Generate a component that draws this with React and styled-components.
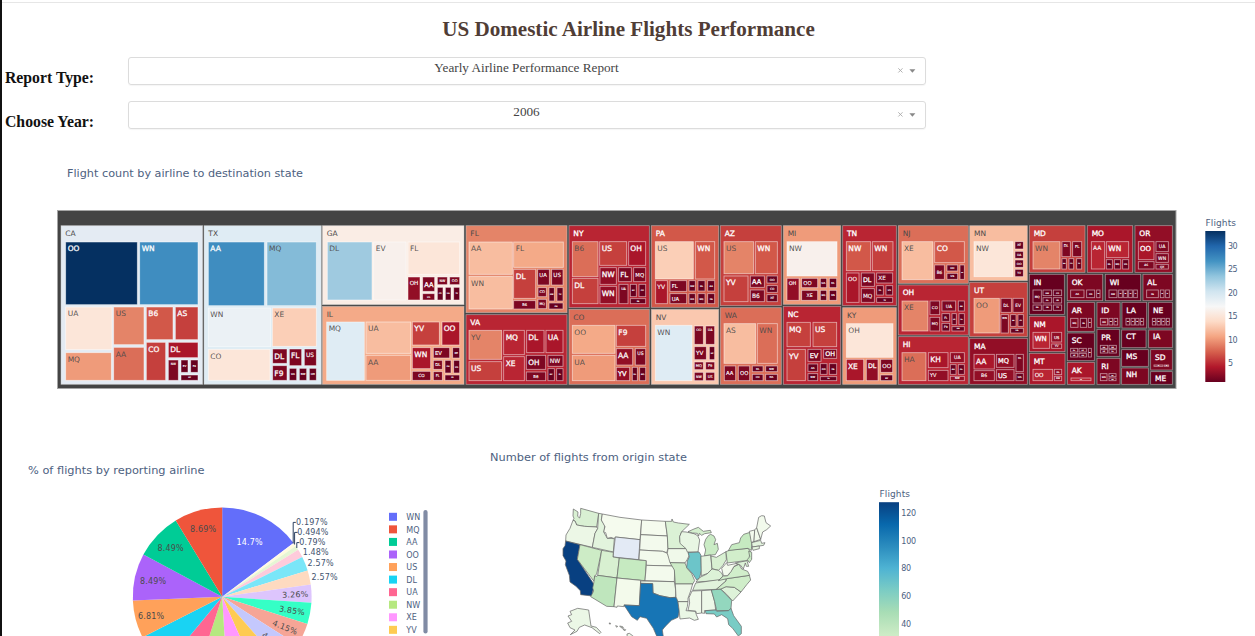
import React from "react";
import styled, { createGlobalStyle } from "styled-components";

const GlobalStyle = createGlobalStyle`
  *, *::before, *::after { box-sizing: border-box; }
  body { margin: 0; background: #fff; overflow: hidden; }
`;

const Page = styled.main`
  height: 636px;
  overflow: hidden;
  border-left: 2px solid #111;
  background: #fff;
  font-family: "Liberation Serif", "Times New Roman", serif;
`;
const TopRule = styled.div`
  height: 1px;
  margin-top: 2px;
  background: #e6e6e6;
`;
const PageBody = styled.div`
  display: flex;
  flex-direction: column;
`;
const Title = styled.h1`
  margin: 0;
  padding-top: 14px;
  height: 54px;
  text-align: center;
  font-size: 21.1px;
  line-height: 24px;
  color: #503d36;
`;
const Field = styled.div`
  display: flex;
  align-items: flex-start;
  height: 44.4px;
  padding-left: 3px;
`;
const FieldLabel = styled.label`
  width: 123px;
  padding-top: 11px;
  font-size: 15.75px;
  line-height: 20px;
  font-weight: bold;
  color: #111;
  white-space: nowrap;
`;
const Select = styled.div`
  display: flex;
  width: 798px;
  height: 28px;
  border: 1px solid #dcdcdc;
  border-radius: 3px;
  box-shadow: 0 1px 1px rgba(0, 0, 0, 0.04);
`;
const SelectValue = styled.span`
  flex: 1;
  padding-left: 27px;
  font-size: 13.2px;
  line-height: 20px;
  text-align: center;
  color: #444;
`;
const SelectTools = styled.span`
  display: flex;
  align-items: center;
  gap: 5px;
  width: 28px;
  height: 25px;
`;
const Figures = styled.section`
  display: flex;
`;
const Chart = styled.svg`
  display: block;
  flex: none;
  font-family: "DejaVu Sans", Verdana, sans-serif;
`;

const palette = {
  N: "#053061", B: "#3f8dc0", L: "#84bbd8", K: "#9fcae0", P: "#dfecf4", Q: "#e4ebf3",
  W: "#ebf1f5", V: "#f8f0ec", A: "#faede5", C: "#fce6d9", D: "#fbcfb7", O: "#fac8af",
  E: "#f8bda0", F: "#f4aa88", G: "#ef9b7a", H: "#e48468", I: "#db6e58", J: "#d25849",
  M: "#c5403d", R: "#b92533", S: "#aa162a", T: "#920e26", U: "#7d0722", X: "#67001f",
};
const lightFills = "LKPQWVACDOEFGHI";

/* Each block is one column group: its left edge, then one line per state
   (label x0 y0 x1 y1 fill) followed by its carriers. Units are thirds of a pixel. */
const groups = [
  [50, `
CA 33 77 458 553 Q; OO 47 126 262 314 N; WN 269 126 444 314 B; UA 47 321 186 449 C; MQ 47 458 184 541 G; US 191 321 282 434 H; AA 191 442 282 541 I; B6 289 321 369 419 J; AS 376 321 444 419 M; CO 289 427 347 541 M; DL 355 427 444 473 S; NW 355 480 385 541 U 9; EV 393 480 414 517 X 8; F9 422 480 444 517 X 8; HP 393 525 444 541 X 6
TX 462 77 814 553 P; AA 475 126 643 317 B; MQ 651 126 799 317 L; WN 475 324 662 440 W; XE 667 324 799 439 D; CO 475 448 660 541 C; DL 668 447 711 490 U; FL 718 447 755 497 U; US 763 447 799 497 U 18; F9 668 497 711 541 U; UA 718 505 740 541 X 8; NW 748 505 770 541 X 8; OH 778 505 799 541 X 8`],
  [315, `
GA 22 77 447 314 A; DL 37 126 171 300 K; EV 176 126 273 300 V; FL 279 126 434 223 C; OH 279 231 315 300 T 17; AA 323 231 359 274 U 20; NW 367 231 397 254 U 10; OO 404 231 434 254 U 11; US 323 281 359 300 U 7; CO 367 262 384 300 X 6; UA 391 262 408 300 X 6; YV 416 262 434 300 X 6
IL 22 319 447 553 F; MQ 35 366 148 541 P; UA 153 366 287 460 E; AA 153 466 287 541 G; YV 292 366 373 435 M; OO 381 366 434 435 S; WN 292 443 347 506 S; EV 355 443 404 474 U 16; XE 413 443 434 474 X 8; CO 292 514 347 541 U 13; DL 355 481 382 508 U 12; FL 355 515 382 541 U 11; OH 390 481 408 519 X 6; US 416 481 434 519 X 7; F9 390 525 434 541 X 6
FL 453 77 756 338 H; AA 462 126 592 223 E; WN 462 229 592 327 E; FL 596 126 745 202 F; DL 596 208 662 295 M; UA 668 208 703 255 U 16; US 710 208 744 255 U 17; CO 669 263 694 290 U 11; MQ 669 298 694 326 U 10; NW 702 263 718 303 X 6; YV 726 263 744 303 X 6; OH 702 309 744 327 X 6; B6 596 302 662 327 U 11
VA 453 344 756 553 R; YV 462 391 560 478 H; US 462 485 560 542 M; MQ 566 391 628 464 R; XE 566 470 628 542 R; DL 635 391 687 458 S; UA 693 391 744 458 S; OH 634 466 692 508 U 22; NW 699 466 744 499 U 18; B6 634 516 692 542 U 12; EV 699 506 718 542 X 6; FL 725 506 744 542 X 6`],
  [560, `
NY 27 77 268 323 R; B6 37 125 114 230 I; DL 37 235 114 311 M; US 119 125 200 196 M; OH 206 125 257 196 S; NW 120 203 169 253 T; WN 120 259 169 311 T; FL 176 203 214 245 U 21; MQ 221 203 257 245 U 16; UA 177 253 204 311 U 10; EV 211 253 229 290 X 6; OO 237 253 257 290 X 6; XE 211 296 257 311 X 6
CO 27 328 268 553 I; OO 37 376 165 460 F; UA 37 466 165 542 G; F9 169 376 257 439 M; AA 169 446 218 495 T; YV 169 502 209 542 T 20; US 226 446 257 495 U 14; DL 217 502 232 542 X 6; MQ 239 502 257 542 X 6
PA 274 77 476 322 J; US 286 125 400 237 D; WN 406 125 464 237 J; YV 287 242 322 311 S 18; FL 330 242 380 274 U 16; UA 330 281 380 311 U 16; NW 387 242 406 273 X 7; DL 414 242 435 273 X 7; AA 443 242 464 273 X 7; OO 387 281 406 311 X 7; MQ 414 281 435 311 X 7; XE 443 281 464 311 X 7
NV 274 328 476 553 O; WN 286 376 396 542 P; OO 403 378 430 433 U 10; UA 437 378 464 433 U 10; YV 403 440 439 479 U 17; HP 448 440 464 479 X 6; MQ 403 486 430 509 U 11; F9 437 486 464 509 U 11; NW 403 517 430 542 U 10; US 437 517 464 542 U 11
AZ 481 77 664 317 M; US 492 125 581 221 H; WN 586 125 652 221 J; YV 492 228 564 305 M; AA 571 228 613 262 U 20; B6 571 270 613 305 U 18; OO 621 228 652 249 X 9; CO 621 257 652 277 X 9; XE 621 284 652 305 X 9
WA 481 323 664 553 I; AS 492 371 587 490 E; WN 592 371 652 490 I; AA 493 498 527 542 U 16; OO 535 498 569 542 U 16; DL 577 498 609 515 X 8; NW 617 498 652 515 X 8; CO 577 523 609 542 X 8; HA 617 523 652 542 X 8`],
  [775, `
MI 25 77 197 313 G; NW 36 125 186 228 V; OH 36 235 72 301 T 15; OO 80 235 128 263 U 16; XE 80 271 128 301 U 14; UA 136 235 155 263 X 8; DL 163 235 185 263 X 8; MQ 136 271 155 301 X 7; US 163 271 185 301 X 8
NC 25 319 197 553 R; MQ 36 367 106 440 M; US 114 367 185 440 M; YV 36 448 91 542 M; EV 99 448 138 484 U 20; OH 146 448 185 475 U 19; AA 99 492 128 514 X 8; NW 99 521 128 542 X 8; OO 136 491 156 523 X 7; XE 163 491 185 523 X 7; DL 136 530 185 542 X 5
TN 203 77 364 317 R; NW 214 125 287 212 J; WN 292 125 354 212 M; OO 214 219 252 307 S 17; DL 259 219 298 259 U 19; MQ 259 266 298 307 U 17; XE 305 219 353 249 U 17; FL 305 257 325 285 X 7; US 333 257 353 285 X 7; YV 305 293 353 307 X 6
KY 203 323 364 553 G; OH 214 371 354 472 C; XE 214 478 266 542 S; DL 274 478 309 542 T 19; OO 317 478 353 517 U 17; EV 317 525 353 542 X 7
NJ 370 77 580 250 I; XE 381 125 474 239 E; CO 479 125 568 188 J; B6 479 195 508 238 U 13; OO 516 195 548 213 X 8; US 516 220 548 238 X 8; UA 555 195 568 238 X 4
OH 370 255 580 405 R; XE 381 303 459 393 H; CO 465 303 494 344 U 12; MQ 465 352 494 393 U 11; UA 501 303 542 333 U 13; AA 550 303 568 333 X 6; FL 501 341 524 364 X 9; F9 501 370 524 393 X 9; US 531 341 544 374 X 5; DL 552 341 568 374 X 5; NW 531 380 568 393 X 5
HI 370 410 580 553 R; HA 381 458 453 542 I; KH 460 458 519 503 S; YV 460 511 519 542 T 15; UA 526 458 568 488 T 14; AA 526 494 543 523 X 6; DL 550 494 568 523 X 6; NW 526 529 568 542 T 8`],
  [965, `
MN 14 77 187 242 E; NW 27 125 144 230 C; XE 150 125 175 147 X 9; UA 150 154 175 175 X 9; OO 150 180 175 202 X 9; YV 150 208 175 230 X 9
UT 14 247 187 410 M; OO 27 295 103 399 G; DL 108 295 139 337 U 13; EV 144 295 175 337 U 13; WN 108 344 130 399 U 8; AA 137 344 153 379 X 5; CO 159 344 175 379 X 5; UA 137 385 175 399 X 6
MA 14 415 187 553 T; AA 27 463 88 507 S; MQ 94 463 147 502 T 20; B6 27 512 88 542 T 14; US 94 509 147 542 T 20; DL 153 463 175 515 U 8; UA 153 520 175 542 X 8
MD 193 77 360 217 M; WN 204 125 285 207 H; DL 291 125 316 170 U 11; FL 323 125 350 170 U 12; AA 291 176 304 207 X 5; CO 312 176 326 207 X 5; YV 335 176 350 207 X 5
MO 367 77 503 217 S; AA 379 125 419 207 R 18; WN 424 125 491 173 R; DL 424 179 442 207 X 7; MQ 448 179 467 207 X 7; US 473 179 491 207 X 7
OR 510 77 622 217 T; OO 520 125 567 179 S 21; UA 573 125 610 155 U 14; WN 573 161 610 187 U 14; AS 520 185 567 207 U 9; QX 573 193 610 207 U 9
IN 193 223 298 343 X; MQ 204 270 229 309 X 9; NW 234 270 260 287 X 6; CO 265 270 290 287 X 6; DL 234 293 260 309 X 6; US 265 293 290 309 X 6; XE 204 315 229 331 X 6; UA 234 315 260 331 X 6; YV 265 315 290 331 X 6
NM 193 349 300 455 S; WN 204 397 254 445 R 21; US 260 397 290 426 T 12; YV 260 432 290 445 T 9
MT 193 460 300 553 S; OO 204 508 263 542 R 17; DL 268 508 290 524 T 7; NW 268 529 290 542 T 7
OK 307 223 413 302 U; AA 317 270 357 293 U 8; CO 365 270 389 293 X 7; US 395 270 405 293 X 4
WI 421 223 527 302 X; NW 432 270 456 293 X 7; OO 461 270 472 293 X 3; MQ 476 270 487 293 X 3; XE 491 270 502 293 X 3; YV 506 270 517 293 X 3
AL 534 223 622 302 U; XE 545 270 580 293 U 7; OH 586 270 597 293 X 3; DL 602 270 613 293 X 3
AR 307 307 388 394 U; MQ 317 355 339 382 U 7; XE 346 355 365 382 X 6; DL 370 355 379 382 X 3
ID 396 307 465 382 U; OO 406 355 428 375 U 7; WN 432 355 443 375 X 3; QX 447 355 458 375 X 3
LA 471 307 545 384 X; WN 483 355 494 375 X 3; XE 498 355 509 375 X 3; MQ 512 355 522 375 X 3; DL 526 355 536 375 X 3
NE 551 307 622 384 X; OO 562 355 572 375 X 3; NW 576 355 586 375 X 3; UA 590 355 600 375 X 3; XE 604 355 613 375 X 3
SC 307 399 388 482 X; DL 317 445 338 456 X 5; US 342 445 364 456 X 5; XE 317 460 338 471 X 5; OH 342 460 364 471 X 5; MQ 370 445 379 471 X 3
PR 396 388 463 469 X; AA 406 436 428 446 X 5; B6 432 436 454 446 X 5; US 406 449 428 459 X 5; DL 432 449 454 459 X 5
CT 470 390 543 443 X
IA 551 390 622 443 U
MS 470 449 550 499 X
SD 557 449 622 510 U; OO 567 495 594 499 U 2; NW 598 495 611 499 U 2
AK 307 487 388 553 S; AS 318 534 378 542 R 4
RI 396 475 465 553 U; WN 406 521 426 542 U 7; US 432 521 453 530 X 4; OO 432 534 453 542 X 4
NH 470 504 550 553 U
ME 557 515 622 553 X`],
];

const parseCell = (s) => {
  const [label, x0, y0, x1, y1, fill, size] = s.trim().split(" ");
  return { label, x: +x0, y: +y0, w: x1 - x0, h: y1 - y0, fill, size: +size || 22.5 };
};
const states = groups.flatMap(([left, text]) =>
  text.trim().split("\n").map((line) => {
    const [state, ...carriers] = line.split(";").map(parseCell);
    return { left, state, carriers };
  })
);

const isLight = (fill) => lightFills.includes(fill);
const inkFor = (fill) => (isLight(fill) ? "#4d4a4a" : "#fff");

function Carrier({ cell }) {
  const small = cell.size < 19;
  const centered = cell.size < 15;
  return (
    <g>
      <rect
        x={cell.x} y={cell.y} width={cell.w} height={cell.h}
        fill={palette[cell.fill]} stroke="#fff" strokeWidth={2.6} strokeOpacity={0.55}
      />
      <text
        x={centered ? cell.x + cell.w / 2 : cell.x + (small || cell.w < 54 ? 5 : 6)}
        y={centered && cell.h < 40 ? cell.y + cell.h / 2 + cell.size * 0.36
          : cell.y + (cell.h < 45 ? cell.h / 2 + cell.size * 0.36 : 7 + cell.size * 0.93)}
        textAnchor={centered ? "middle" : "start"}
        fontSize={cell.size} fill={inkFor(cell.fill)} fillOpacity={0.95}
        stroke={isLight(cell.fill) ? "none" : "#fff"} strokeWidth={small ? 0.4 : 0.9}
      >{cell.label}</text>
    </g>
  );
}

function Treemap() {
  return (
    <Chart width="1253" height="286" viewBox="2 146 1253 286">
      <defs>
        <linearGradient id="rdbu" x1="0" y1="0" x2="0" y2="1">
          {["#053061", "#2166ac", "#4393c3", "#92c5de", "#d1e5f0", "#f7f7f7", "#fddbc7", "#f4a582", "#d6604d", "#b2182b", "#67001f"].map((c, i) => (
            <stop key={c} offset={i / 10} stopColor={c} />
          ))}
        </linearGradient>
      </defs>
      <text x="67" y="177" fontSize="11" fill="#4d617f" textLength="236" lengthAdjust="spacingAndGlyphs">Flight count by airline to destination state</text>
      <rect x="57.5" y="210.5" width="1118.5" height="178" fill="#444" stroke="#a5a5a5" />
      {states.map(({ left, state, carriers }) => (
        <g key={state.label} transform={`translate(${left} 200) scale(0.33333)`}>
          <rect x={state.x} y={state.y} width={state.w} height={state.h} fill={palette[state.fill]} stroke="#c9c9c9" strokeOpacity="0.6" strokeWidth="2.4" />
          <text
            x={state.x + 13} y={state.y + (state.h < 55 ? 28 : 31)} fontSize="22.5"
            fill={inkFor(state.fill)} stroke={isLight(state.fill) ? "none" : "#fff"} strokeWidth="0.9"
          >{state.label}</text>
          {carriers.map((c, i) => <Carrier key={i} cell={c} />)}
        </g>
      ))}
      <text x="1205.5" y="226" fontSize="9" fill="#4d617f" textLength="30.5">Flights</text>
      <rect x="1205.3" y="231" width="20" height="151" fill="url(#rdbu)" />
      {[30, 25, 20, 15, 10, 5].map((v, i) => (
        <text key={v} x="1228" y={248.5 + i * 23.55} fontSize="8" fill="#4d617f" textLength={v > 9 ? 9.6 : undefined}>{v}</text>
      ))}
    </Chart>
  );
}

const center = [222.2, 596.8];
const radius = 89.4;
const slices = [
  [14.7, "#636efa"], [0.197, "#fff5f0"], [0.494, "#fefbdc"], [0.79, "#e6f6d4"], [1.48, "#fecbdb"],
  [2.57, "#7ae6f8"], [2.57, "#fedac0"], [3.26, "#ddc5fd"], [3.85, "#35ffc6"], [4.15, "#f6a596"],
  [4.45, "#c4c8fd"], [4.83, "#fecb52"], [5.73, "#ff97ff"], [5.95, "#b6e880"], [6, "#ff6692"],
  [6.5, "#19d3f3"], [6.81, "#ffa15a"], [8.49, "#ab63fa"], [8.49, "#00cc96"], [8.69, "#ef553b"],
];
const sliceTotal = slices.reduce((sum, [v]) => sum + v, 0);
const rim = (share) => {
  const a = (share / sliceTotal) * 2 * Math.PI;
  return `${center[0] + radius * Math.sin(a)} ${center[1] - radius * Math.cos(a)}`;
};
const wedges = slices.map(([v, color], i) => {
  const from = slices.slice(0, i).reduce((sum, [s]) => sum + s, 0);
  return { color, d: `M${center.join(" ")}L${rim(from)}A${radius} ${radius} 0 0 1 ${rim(from + v)}Z` };
});
const pieLabels = [
  ["14.7%", 249.5, 544.5, 0, "#fff"], ["8.69%", 203, 532.2, 0], ["8.49%", 170.5, 551.2, 0],
  ["8.49%", 153, 584.2, 0], ["6.81%", 151, 618.7, 0], ["3.26%", 295.2, 597.3, -2],
  ["3.85%", 292, 613.3, 9], ["4.15%", 285, 630.2, 22], ["4.45%", 273.5, 644.5, 36],
];
const outerLabels = [
  ["0.197%", 296, 525.2, 31.5], ["0.494%", 297.3, 535.2, 31], ["0.79%", 299.3, 545.2, 26],
  ["1.48%", 302.7, 555.2, 26], ["2.57%", 307.5, 565.7, 26], ["2.57%", 311.5, 580.2, 26],
];
const legend = [
  ["WN", "#636efa"], ["MQ", "#ef553b"], ["AA", "#00cc96"], ["OO", "#ab63fa"], ["US", "#ffa15a"],
  ["DL", "#19d3f3"], ["UA", "#ff6692"], ["NW", "#b6e880"], ["XE", "#ff97ff"], ["YV", "#fecb52"],
];

function AirlinePie() {
  return (
    <Chart width="468" height="204" viewBox="2 432 468 204">
      <text x="28" y="474" fontSize="11" fill="#4d617f" textLength="176.5" lengthAdjust="spacingAndGlyphs">% of flights by reporting airline</text>
      {wedges.map((w, i) => <path key={i} d={w.d} fill={w.color} />)}
      {pieLabels.map(([t, x, y, turn, fill], i) => (
        <text key={i} x={x} y={y} fontSize="8" textAnchor="middle" textLength="26" fill={fill || "#4b4b4b"} transform={`rotate(${turn} ${x} ${y - 3})`}>{t}</text>
      ))}
      <path d="M295.8 522.4H293.2V543.5M297.6 532.4H294.6V544.5M299.4 542.6H296.8V548" fill="none" stroke="#2a3f5f" strokeWidth="1" />
      {outerLabels.map(([t, x, y, len], i) => (
        <text key={i} x={x} y={y} fontSize="8" textLength={len} fill="#43546f">{t}</text>
      ))}
      {legend.map(([name, color], i) => (
        <g key={name}>
          <rect x="389" y={512.8 + i * 12.56} width="8" height="8" fill={color} />
          <text x="406.3" y={520 + i * 12.56} fontSize="8" fill="#4d617f">{name}</text>
        </g>
      ))}
      <rect x="423.4" y="510" width="4.2" height="123.5" rx="2.1" fill="#808ba4" />
    </Chart>
  );
}

/* State outlines, in thirds of a pixel from the map's corner. */
const outlines = [
  ["#d9f0d3", "92,55 146,70 140,111 103,109 80,105 75,93 69,91 72,85 69,78 70,57 84,66 83,79 89,84 92,70"],
  ["#ecf7e6", "69,91 75,93 80,105 103,109 140,111 143,116 135,130 127,172 47,153 48,135 60,115"],
  ["#084081", "47,153 90,164 82,208 130,280 133,293 128,303 126,318 92,314 91,302 78,289 60,276 58,256 46,224 48,213 39,197 39,176 45,167"],
  ["#cdecc6", "90,164 155,181 140,252 134,258 132,274 82,208"],
  ["#e2f4dd", "146,70 157,72 154,90 164,106 162,128 172,145 193,146 190,186 127,172 135,130 143,116"],
  ["#f5fbee", "157,72 210,82 275,90 270,149 196,141 193,146 183,142 172,145 167,128 161,126 165,110 154,90"],
  ["#e3eaf5", "196,141 270,149 266,209 189,201"],
  ["#d8f0d1", "155,181 190,187 189,201 208,204 201,264 143,256"],
  ["#c6eac1", "208,204 289,212 285,272 201,264"],
  ["#bfe6bd", "143,256 201,264 192,350 170,349 122,320 131,303 128,294 132,275 134,258 141,259"],
  ["#f3faeb", "201,264 272,271 268,347 222,345 223,350 202,348 201,352 192,350"],
  ["#f5fbee", "275,90 346,94 352,138 272,134"],
  ["#f3faed", "272,134 352,138 354,176 350,188 338,184 269,180"],
  ["#f2faec", "269,180 338,184 352,190 360,206 368,228 289,226 289,212 267,209"],
  ["#f3faed", "289,226 368,228 374,240 373,275 285,272"],
  ["#ecf7e6", "272,273 373,275 377,300 377,322 360,323 330,317 309,309 308,281 272,280"],
  ["#1775b5", "272,280 308,281 309,309 330,317 360,323 377,322 383,328 388,362 384,382 364,391 345,410 337,420 340,441 320,438 310,415 290,385 270,380 262,391 245,380 222,345 268,347"],
  ["#dbf1d5", "346,94 365,94 366,87 370,96 385,99 418,103 395,125 389,140 390,155 410,176 354,176 352,138"],
  ["#f0f9ea", "354,176 410,176 418,195 412,208 405,219 360,218 352,190"],
  ["#cdebc7", "360,218 405,219 412,236 425,251 434,272 428,282 376,282 373,240"],
  ["#edf7e7", "376,282 428,282 422,303 414,325 414,335 384,335 378,320"],
  ["#eaf7e5", "384,335 414,335 412,350 408,362 436,364 439,374 445,388 433,391 419,384 390,387 387,358"],
  ["#e8f6e3", "395,125 408,126 432,131 443,137 449,150 444,186 412,186 408,176 390,160 389,140"],
  ["#6cc5c9", "414,188 447,186 453,196 454,242 449,263 440,270 429,252 410,232 412,213 418,200"],
  ["#d4efce", "414,125 432,117 445,112 460,124 481,121 484,128 464,131 455,136 448,130 446,138 442,130 428,129"],
  ["#caebc5", "475,137 482,133 492,138 497,149 492,164 502,160 505,178 496,194 463,197 467,180 462,164 467,148"],
  ["#e4f4df", "453,199 482,195 486,237 474,250 454,257"],
  ["#d8f0d2", "483,198 499,202 528,185 529,209 519,226 506,241 486,236"],
  ["#dcf2d7", "438,276 450,262 471,252 486,237 505,241 515,249 519,258 505,272"],
  ["#e1f3dc", "428,301 437,279 528,266 528,273 499,298"],
  ["#f0f9ea", "426,303 455,302 455,369 440,371 437,363 414,361 419,339 417,323"],
  ["#edf8e8", "455,302 484,300 494,335 497,360 463,362 464,370 455,369"],
  ["#93d7be", "484,300 512,297 545,331 543,356 536,362 500,362 494,335"],
  ["#79ccc5", "466,362 498,360 500,364 536,362 543,355 551,377 574,409 574,431 565,438 548,415 536,404 533,386 515,374 500,381 493,372 468,371"],
  ["#def2d9", "512,297 528,290 553,292 573,306 548,333 530,313"],
  ["#cfedc9", "499,298 528,273 530,266 598,256 602,270 591,283 573,306 553,292 528,290 513,297"],
  ["#d1eecb", "505,272 520,258 534,257 544,242 552,230 567,223 575,237 593,244 599,256 530,266"],
  ["#f3faed", "515,235 530,218 533,226 556,221 566,222 552,229 543,245 532,257 520,257"],
  ["#dcf2d7", "556,219 591,212 596,229 589,229 586,219 580,237 571,225"],
  ["#d2eecb", "528,185 540,180 594,175 602,185 598,200 604,207 594,211 532,219"],
  ["#c6eac1", "535,182 545,164 568,158 572,144 581,133 600,127 606,154 604,181 594,175 540,181"],
  ["#c7eac2", "596,183 605,187 605,208 598,218 592,209 599,200"],
  ["#f3faed", "598,124 614,120 612,155 604,157"],
  ["#f1f9eb", "614,120 620,113 632,148 612,155"],
  ["#f2faec", "620,113 626,82 635,77 643,78 648,98 662,108 650,119 638,126 632,148"],
  ["#e3f4de", "605,158 632,151 635,160 645,158 641,166 607,171"],
  ["#e5f5df", "606,171 628,168 628,176 609,181"],
  ["#ebf7e6", "54,378 65,374 60,364 83,355 116,360 123,408 139,412 153,427 149,431 126,413 104,405 88,412 81,424 61,434 75,420 60,413 53,399 65,394"],
  ["#ebf7e6", "231,432 238,430 248,437 246,444 232,444"],
  ["#ebf7e6", "197,407 203,409 200,412"],
  ["#ebf7e6", "209,408 218,410 220,414 213,413"],
  ["#ebf7e6", "218,416 227,419 224,423"],
  ["#ebf7e6", "177,399 182,400 180,403"],
];

function OriginMap() {
  return (
    <Chart width="785" height="204" viewBox="470 432 785 204">
      <defs>
        <linearGradient id="gnbu" x1="0" y1="0" x2="0" y2="1">
          {["#084081", "#0868ac", "#2b8cbe", "#4eb3d3", "#7bccc4", "#a8ddb5", "#ccebc5", "#e0f3db", "#f7fcf0"].map((c, i) => (
            <stop key={c} offset={i / 8} stopColor={c} />
          ))}
        </linearGradient>
      </defs>
      <text x="490" y="461" fontSize="11" fill="#4d617f" textLength="197" lengthAdjust="spacingAndGlyphs">Number of flights from origin state</text>
      <g transform="translate(550 490) scale(0.33333)" stroke="#666" strokeWidth="2.1" strokeLinejoin="round">
        {outlines.map(([fill, points], i) => <polygon key={i} points={points} fill={fill} />)}
      </g>
      <text x="879.5" y="496.5" fontSize="9" fill="#4d617f" textLength="30.5">Flights</text>
      <rect x="879" y="502.2" width="20" height="176" fill="url(#gnbu)" />
      {[120, 100, 80, 60, 40].map((v, i) => (
        <text key={v} x="901.3" y={516.2 + i * 27.6} fontSize="8" fill="#4d617f" textLength={v > 99 ? 14.8 : 9.8}>{v}</text>
      ))}
    </Chart>
  );
}

function Dropdown({ label, value }) {
  return (
    <Field>
      <FieldLabel>{label}</FieldLabel>
      <Select>
        <SelectValue>{value}</SelectValue>
        <SelectTools>
          <svg width="7" height="7" viewBox="0 0 7 7"><path d="M1.3 1.3 5.5 5.5M5.5 1.3 1.3 5.5" stroke="#aaa" strokeWidth="0.9" /></svg>
          <svg width="7" height="4" viewBox="0 0 7 4"><path d="M0.4 0.2H6.4L3.4 3.8Z" fill="#888" /></svg>
        </SelectTools>
      </Select>
    </Field>
  );
}

export default function App() {
  return (
    <Page>
      <GlobalStyle />
      <TopRule />
      <PageBody>
        <Title>US Domestic Airline Flights Performance</Title>
        <Dropdown label="Report Type:" value="Yearly Airline Performance Report" />
        <Dropdown label="Choose Year:" value="2006" />
        <Treemap />
        <Figures>
          <AirlinePie />
          <OriginMap />
        </Figures>
      </PageBody>
    </Page>
  );
}
